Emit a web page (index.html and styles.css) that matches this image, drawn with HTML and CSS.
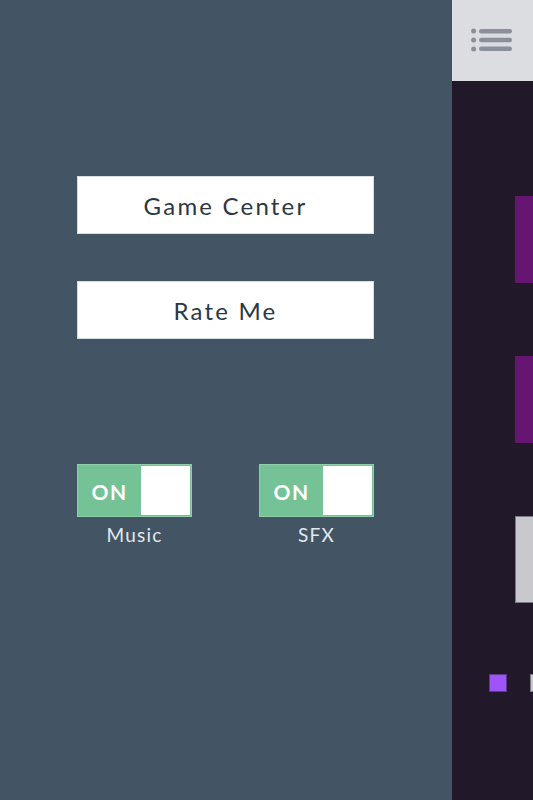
FILE: index.html
```html
<!DOCTYPE html>
<html>
<head>
<meta charset="utf-8">
<link rel="stylesheet" href="styles.css">
</head>
<body>
<div class="app">
  <div class="menu">
    <div class="btn">Game Center</div>
    <div class="btn">Rate Me</div>
    <div class="toggles">
      <div class="tgroup">
        <div class="toggle"><span class="on">ON</span><span class="knob"></span></div>
        <div class="tlabel">Music</div>
      </div>
      <div class="tgroup">
        <div class="toggle"><span class="on">ON</span><span class="knob"></span></div>
        <div class="tlabel">SFX</div>
      </div>
    </div>
  </div>
  <div class="game">
    <div class="header">
      <svg class="listicon" width="42" height="24" viewBox="0 0 42 24">
        <circle cx="2.6" cy="3" r="2.5" fill="#8a8f99"/>
        <circle cx="2.6" cy="12" r="2.5" fill="#8a8f99"/>
        <circle cx="2.6" cy="21" r="2.5" fill="#8a8f99"/>
        <rect x="8" y="1" width="33" height="4.4" rx="2.2" fill="#8a8f99"/>
        <rect x="8" y="9.8" width="33" height="4.4" rx="2.2" fill="#8a8f99"/>
        <rect x="8" y="18.6" width="33" height="4.4" rx="2.2" fill="#8a8f99"/>
      </svg>
    </div>
    <div class="canvas">
      <div class="block purple b1"></div>
      <div class="block purple b2"></div>
      <div class="block grey b3"></div>
      <div class="sq violet s1"></div>
      <div class="sq greysq s2"></div>
    </div>
  </div>
</div>
</body>
</html>
```
FILE: styles.css
```css
html, body {
  margin: 0;
  padding: 0;
  width: 533px;
  height: 800px;
  overflow: hidden;
  font-family: "Lato", "Open Sans", sans-serif;
}
.app {
  display: flex;
  width: 533px;
  height: 800px;
}
.menu {
  width: 452px;
  flex: none;
  background: #435464;
  box-sizing: border-box;
  padding: 176px 0 0 77px;
  display: flex;
  flex-direction: column;
}
.btn {
  width: 297px;
  height: 58px;
  background: #ffffff;
  color: #2c3845;
  font-size: 24px;
  letter-spacing: 2.2px;
  display: flex;
  align-items: center;
  justify-content: center;
  margin-bottom: 47px;
  box-sizing: border-box;
  border: 1px solid #d8dde2;
}
.toggles {
  display: flex;
  gap: 67px;
  margin-top: 78px;
}
.tgroup {
  display: flex;
  flex-direction: column;
  align-items: center;
  width: 115px;
}
.toggle {
  width: 115px;
  height: 53px;
  box-sizing: border-box;
  border: 1px solid #8fcfa8;
  background: #74c295;
  display: flex;
}
.on {
  width: 63px;
  display: flex;
  align-items: center;
  justify-content: center;
  color: #ffffff;
  font-size: 21px;
  font-weight: 700;
  letter-spacing: 1.5px;
  padding-top: 1px;
}
.knob {
  flex: 1;
  background: #ffffff;
  margin: 1px 1px 1px 0;
}
.tlabel {
  color: #e4e8ec;
  font-size: 19px;
  letter-spacing: 1.2px;
  margin-top: 6px;
}
.game {
  flex: 1;
  display: flex;
  flex-direction: column;
  background: #211829;
}
.header {
  height: 81px;
  background: #dcdde0;
  display: flex;
  align-items: center;
  padding-left: 19px;
  box-sizing: border-box;
}
.listicon {
  margin-top: -1px;
}
.canvas {
  flex: 1;
  position: relative;
  overflow: hidden;
}
.block {
  position: absolute;
  left: 63px;
  width: 40px;
  height: 87px;
}
.purple { background: #661670; }
.b1 { top: 115px; }
.b2 { top: 275px; }
.grey {
  top: 435px;
  background: #c8c8cd;
  border: 1px solid #7d7a85;
  box-sizing: border-box;
}
.sq {
  position: absolute;
  top: 593px;
  width: 18px;
  height: 18px;
  box-sizing: border-box;
}
.violet {
  left: 37px;
  background: #9d55f8;
  border: 1px solid #5a3a8a;
}
.greysq {
  left: 78px;
  background: #c8c8cd;
  border: 1px solid #7d7a85;
}
```
